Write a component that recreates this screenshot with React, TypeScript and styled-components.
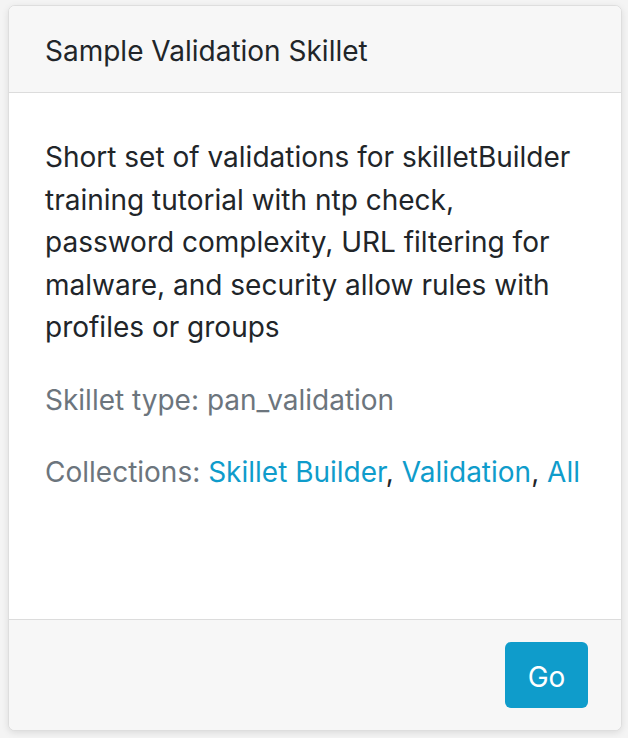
import React from 'react'
import styled, { createGlobalStyle } from 'styled-components'

const GlobalStyle = createGlobalStyle`
  html, body {
    margin: 0;
    padding: 0;
    background: #f4f4f4;
  }
  body {
    font-family: Inter, "Liberation Sans", Arial, sans-serif;
    -webkit-font-smoothing: antialiased;
  }
`

const Page = styled.div`
  padding: 5px 6px 7px 8px;
`

const Card = styled.div`
  display: flex;
  flex-direction: column;
  height: 726px;
  box-sizing: border-box;
  background: #fff;
  border: 1px solid #dedede;
  border-radius: 7px;
  overflow: hidden;
  box-shadow: 0 2px 7px rgba(0, 0, 0, 0.1);
`

const CardHeader = styled.div`
  background: #f7f7f7;
  border-bottom: 1px solid #dcdcdc;
  padding: 4px 36px 0;
  height: 87px;
  box-sizing: border-box;
  display: flex;
  align-items: center;
`

const Title = styled.h5`
  margin: 0;
  font-size: 28px;
  font-weight: 400;
  color: #212529;
`

const CardBody = styled.div`
  flex: 1;
  padding: 43px 36px 0;
`

const Text = styled.p<{ muted?: boolean }>`
  margin: 0 0 30px;
  font-size: 28px;
  line-height: 42.5px;
  color: ${({ muted }) => (muted ? '#6c757d' : '#212529')};
`

const Link = styled.a`
  color: #0f9ccb;
  text-decoration: none;
`

const Sep = styled.span`
  color: #212529;
`

const CardFooter = styled.div`
  background: #f7f7f7;
  border-top: 1px solid #dcdcdc;
  padding: 22px 33px 22px;
  display: flex;
  justify-content: flex-end;
`

const GoButton = styled.button`
  width: 83px;
  height: 66px;
  padding: 4px 0 0;
  border: none;
  border-radius: 6px;
  background: #0f9ccb;
  color: #fff;
  font-family: inherit;
  font-size: 28px;
  cursor: pointer;
`

const collections = ['Skillet Builder', 'Validation', 'All']

export default function App() {
  return (
    <>
      <GlobalStyle />
      <Page>
        <Card>
          <CardHeader>
            <Title>Sample Validation Skillet</Title>
          </CardHeader>
          <CardBody>
            <Text>
              Short set of validations for skilletBuilder training tutorial with ntp check,
              password complexity, URL filtering for malware, and security allow rules with
              profiles or groups
            </Text>
            <Text muted>Skillet type: pan_validation</Text>
            <Text muted>
              Collections:{' '}
              {collections.map((c, i) => (
                <React.Fragment key={c}>
                  <Link href="#">{c}</Link>
                  {i < collections.length - 1 && <Sep>, </Sep>}
                </React.Fragment>
              ))}
            </Text>
          </CardBody>
          <CardFooter>
            <GoButton>Go</GoButton>
          </CardFooter>
        </Card>
      </Page>
    </>
  )
}
